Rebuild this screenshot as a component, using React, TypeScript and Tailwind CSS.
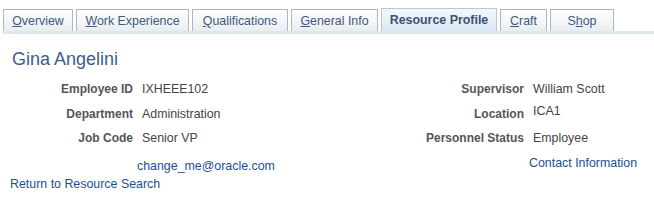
import React from 'react';

const tabs = [
  { pre: '', key: 'O', post: 'verview', w: 'w-[70px]' },
  { pre: '', key: 'W', post: 'ork Experience', w: 'w-[113px]' },
  { pre: '', key: 'Q', post: 'ualifications', w: 'w-[96px]' },
  { pre: '', key: 'G', post: 'eneral Info', w: 'w-[87px]' },
  { pre: 'Resource Profile', key: '', post: '', w: 'w-[116px]', active: true },
  { pre: '', key: 'C', post: 'raft', w: 'w-[47px]' },
  { pre: 'S', key: 'h', post: 'op', w: 'w-[64px]' },
];

const Field = ({ label, value, raised }: { label: string; value: string; raised?: boolean }) => (
  <>
    <div className="text-right font-bold text-[12px] text-[#555] h-[24.5px] leading-[24px]">{label}</div>
    <div className={`text-[#444] h-[24.5px] ${raised ? 'leading-[12px] pt-[3px]' : 'leading-[24px]'}`}>{value}</div>
  </>
);

const App = () => {
  return (
    <div className="w-[654px] h-[202px] bg-white text-[12.4px] font-['Liberation_Sans',Arial,sans-serif] overflow-hidden">
      {/* Tabs */}
      <div className="pt-[8px] pl-[3px]">
        <div className="flex items-end gap-[3px] h-[23px]">
          {tabs.map((t, i) => (
            <div
              key={i}
              className={`${t.w} flex items-center justify-center border border-b-0 text-[12.4px] ${
                t.active
                  ? 'h-[23px] border-[#b8c6d6] bg-gradient-to-b from-[#f4f8fc] to-[#dce7f2] font-bold text-[#3b5275]'
                  : 'h-[22px] border-[#aab7c6] bg-gradient-to-b from-white to-[#eaedf0] text-[#3d5a80]'
              }`}
            >
              <span className="pt-[1px]">
                {t.pre}
                {t.key && <span className="underline underline-offset-[1px]">{t.key}</span>}
                {t.post}
              </span>
            </div>
          ))}
        </div>
        <div className="h-[3px] bg-[#dde7f3]" />
      </div>

      {/* Name */}
      <div className="pl-[12px] pt-[13px] text-[18px] leading-[24px] text-[#3a5e8c]">Gina Angelini</div>

      {/* Fields */}
      <div className="flex pt-[6px]">
        <div className="w-[330px]">
          <div className="grid grid-cols-[133px_1fr] gap-x-[9px]">
            <Field label="Employee ID" value="IXHEEE102" />
            <Field label="Department" value="Administration" />
            <Field label="Job Code" value="Senior VP" />
          </div>
          <div className="pl-[137px] pt-[5px] leading-[20px] text-[#1b4f8f]">change_me@oracle.com</div>
        </div>
        <div className="w-[324px]">
          <div className="grid grid-cols-[194px_1fr] gap-x-[9px]">
            <Field label="Supervisor" value="William Scott" />
            <Field label="Location" value="ICA1" raised />
            <Field label="Personnel Status" value="Employee" />
          </div>
          <div className="pl-[199px] pt-[2px] leading-[20px] text-[#1b4f8f]">Contact Information</div>
        </div>
      </div>
      <div className="pl-[10px] leading-[18px] text-[#1b4f8f] -mt-[1px]">Return to Resource Search</div>
    </div>
  );
};

export default App;
